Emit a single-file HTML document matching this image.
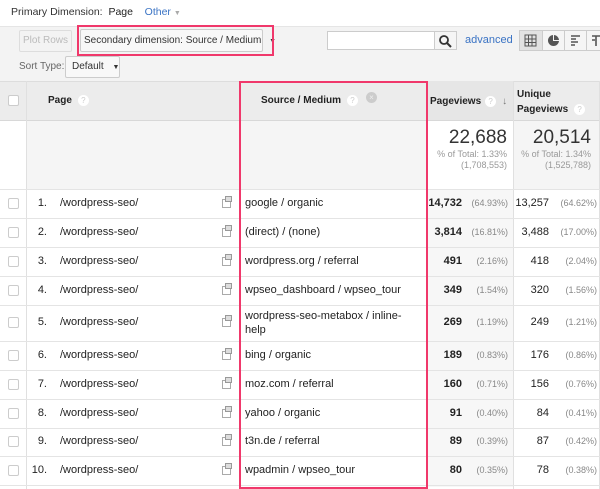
<!DOCTYPE html>
<html><head><style>
*{margin:0;padding:0;box-sizing:border-box}
body{width:600px;height:489px;overflow:hidden;background:#fff;font-family:"Liberation Sans",sans-serif;color:#222;position:relative;font-size:11px}
.a{position:absolute;white-space:nowrap}
.tb{position:absolute;left:0;top:26px;width:600px;height:55px;background:#f3f3f3;border-top:1px solid #e5e5e5}
.hl{position:absolute;left:0;width:600px;height:1px;background:#e4e4e4}
.vl{position:absolute;width:1px;background:#e0e0e0}
.cb{position:absolute;left:8px;width:11px;height:11px;border:1px solid #ccc;background:#fff;border-radius:2px}
.q{display:inline-block;width:11px;height:11px;border-radius:50%;background:#fff;color:#ccc;font-size:8px;text-align:center;line-height:11px;vertical-align:middle;margin-left:6px;font-weight:normal}
.pc{color:#888;font-size:9px}
</style></head><body>
<div class="a" style="left:11px;top:6px;font-size:10.5px;color:#333">Primary Dimension: &nbsp;<span style="color:#222">Page</span> &nbsp; &nbsp;<span style="color:#3a73c4">Other</span> <span style="color:#aaa;font-size:7px">▼</span></div>
<div class="tb"></div>
<div class="a" style="left:19px;top:30px;width:53px;height:22px;border:1px solid #ddd;border-radius:2px;color:#bbb;font-size:10px;line-height:20px;text-align:center">Plot Rows</div>
<div class="a" style="left:80px;top:29px;width:183px;height:23px;border:1px solid #ccc;border-radius:2px;background:#f8f8f8;font-size:10px;line-height:21px;padding-left:3px;color:#333">Secondary dimension: Source / Medium <span style="font-size:7px;margin-left:5px">▼</span></div>
<div class="a" style="left:77px;top:25px;width:197px;height:31px;border:2px solid #f0386b"></div>
<div class="a" style="left:19px;top:61px;font-size:10px;color:#666">Sort Type:</div>
<div class="a" style="left:65px;top:56px;width:55px;height:22px;border:1px solid #ccc;border-radius:2px;background:#f8f8f8;font-size:10px;line-height:20px;padding-left:6px;color:#333">Default <span style="font-size:7px;margin-left:6px">▼</span></div>
<div class="a" style="left:327px;top:31px;width:130px;height:19px;border:1px solid #ccc;background:#fff"></div>
<div class="a" style="left:434px;top:31px;width:23px;height:19px;border:1px solid #ccc;background:#f5f5f5"><svg width="21" height="17"><circle cx="9" cy="8" r="4" fill="none" stroke="#333" stroke-width="1.8"/><path d="M12 11l4 4" stroke="#333" stroke-width="2"/></svg></div>
<div class="a" style="left:465px;top:34px;color:#3a73c4;font-size:11px">advanced</div>
<div class="a" style="left:519px;top:30px;width:90px;height:21px;border:1px solid #ccc;background:#f5f5f5"></div>
<div class="a" style="left:520px;top:31px;width:22px;height:19px;background:#e2e2e2"></div>
<div class="a" style="left:542px;top:30px;width:1px;height:21px;background:#ccc"></div>
<div class="a" style="left:564px;top:30px;width:1px;height:21px;background:#ccc"></div>
<div class="a" style="left:586px;top:30px;width:1px;height:21px;background:#ccc"></div>
<svg class="a" style="left:524px;top:34px" width="14" height="14"><path d="M1 1h11v11H1zM1 5h11M1 8.5h11M4.5 1v11M8 1v11" fill="none" stroke="#555" stroke-width="1"/></svg>
<svg class="a" style="left:547px;top:34px" width="14" height="14"><circle cx="6.5" cy="6.5" r="5.5" fill="#555"/><path d="M6.5 1v5.5h5.5" fill="none" stroke="#f5f5f5" stroke-width="1"/></svg>
<svg class="a" style="left:569px;top:34px" width="14" height="14"><path d="M2 2h9M2 5h5M2 8h7M2 11h4" stroke="#555" stroke-width="1.6"/></svg>
<svg class="a" style="left:591px;top:34px" width="10" height="14"><path d="M1 2h8M5 2v10M1 6h3" stroke="#555" stroke-width="1.6"/></svg>

<div class="a" style="left:0;top:81px;width:600px;height:40px;background:#ececec;border-top:1px solid #ddd"></div>
<div class="a" style="left:427px;top:81px;width:86px;height:40px;background:#e6e6e6"></div>
<div class="cb" style="top:95px"></div>
<div class="a" style="left:48px;top:95px;font-size:10px;font-weight:bold">Page<span class="q">?</span></div>
<div class="a" style="left:261px;top:95px;font-size:10px;font-weight:bold">Source / Medium<span class="q">?</span><span class="q" style="background:#ccc;color:#eee;margin-left:8px;position:relative;top:-3px">×</span></div>
<div class="a" style="left:430px;top:96px;font-size:10px;font-weight:bold">Pageviews<span class="q" style="margin-left:4px">?</span><span style="color:#777;font-weight:normal;margin-left:6px">↓</span></div>
<div class="a" style="left:517px;top:87px;font-size:10px;font-weight:bold;line-height:15px">Unique<br>Pageviews<span class="q">?</span></div>
<div class="hl" style="top:120px;background:#d8d8d8"></div>
<div class="a" style="left:26px;top:121px;width:401px;height:68px;background:#f5f5f5"></div>
<div class="a" style="left:513px;top:121px;width:87px;height:68px;background:#f5f5f5"></div>
<div class="a" style="left:427px;top:127px;width:80px;text-align:right;font-size:19px;color:#333">22,688</div>
<div class="a" style="left:400px;top:149px;width:107px;text-align:right;font-size:9px;color:#999;line-height:11px">% of Total: 1.33%<br>(1,708,553)</div>
<div class="a" style="left:513px;top:127px;width:78px;text-align:right;font-size:19px;color:#333">20,514</div>
<div class="a" style="left:480px;top:149px;width:111px;text-align:right;font-size:9px;color:#999;line-height:11px">% of Total: 1.34%<br>(1,525,788)</div>

<div class="a" style="left:427px;top:189px;width:86px;height:298px;background:#f7f7f7"></div>
<div class="vl" style="left:26px;top:81px;height:408px"></div>
<div class="vl" style="left:513px;top:81px;height:408px"></div>
<div class="vl" style="left:599px;top:81px;height:408px"></div>

<div id="rows"></div>
<script>
var d=[["google / organic","14,732","(64.93%)","13,257","(64.62%)"],["(direct) / (none)","3,814","(16.81%)","3,488","(17.00%)"],["wordpress.org / referral","491","(2.16%)","418","(2.04%)"],["wpseo_dashboard / wpseo_tour","349","(1.54%)","320","(1.56%)"],["wordpress-seo-metabox / inline-<br>help","269","(1.19%)","249","(1.21%)"],["bing / organic","189","(0.83%)","176","(0.86%)"],["moz.com / referral","160","(0.71%)","156","(0.76%)"],["yahoo / organic","91","(0.40%)","84","(0.41%)"],["t3n.de / referral","89","(0.39%)","87","(0.42%)"],["wpadmin / wpseo_tour","80","(0.35%)","78","(0.38%)"]];
var ys=[189,218,247,276,305,341,370,399,428,456,485],h="";
h+='<div class="hl" style="top:189px"></div>';
for(var i=0;i<10;i++){var t=ys[i],b=ys[i+1],m=(t+b)/2;
h+='<div class="hl" style="top:'+b+'px"></div>';
h+='<div class="cb" style="top:'+(m-6)+'px"></div>';
h+='<div class="a" style="left:20px;width:27px;text-align:right;top:'+(m-7)+'px">'+(i+1)+'.</div>';
h+='<div class="a" style="left:60px;top:'+(m-7)+'px">/wordpress-seo/</div>';
h+='<div class="a" style="left:222px;top:'+(m-5)+'px;width:9px;height:9px;border:1px solid #aaa;background:#fff"></div><div class="a" style="left:225px;top:'+(m-8)+'px;width:7px;height:6px;border:1px solid #999;background:#ddd"></div>';
var lh=i==4?'line-height:14px;top:'+(m-14)+'px':'top:'+(m-7)+'px';
h+='<div class="a" style="left:245px;'+lh+'">'+d[i][0]+'</div>';
h+='<div class="a" style="left:420px;width:88px;text-align:right;top:'+(m-7)+'px"><b>'+d[i][1]+'</b><span class="pc" style="display:inline-block;width:46px;text-align:right">'+d[i][2]+'</span></div>';
h+='<div class="a" style="left:505px;width:92px;text-align:right;top:'+(m-7)+'px">'+d[i][3]+'<span class="pc" style="display:inline-block;width:48px;text-align:right">'+d[i][4]+'</span></div>';}
document.getElementById('rows').innerHTML=h;
</script>
<div class="a" style="left:239px;top:81px;width:189px;height:408px;border:2px solid #f0386b"></div>
</body></html>
